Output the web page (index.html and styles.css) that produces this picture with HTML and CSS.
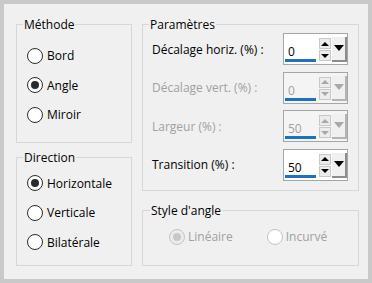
FILE: index.html
```html
<!DOCTYPE html>
<html lang="fr">
<head>
    <meta charset="UTF-8">
    <title>Angle</title>
    <link rel="stylesheet" href="styles.css">
</head>
<body>
    <div class="window">
        <div class="panel">
            <div class="col col-left">
                <fieldset class="group group-methode">
                    <legend>Méthode</legend>
                    <label class="radio"><span class="dot"></span>Bord</label>
                    <label class="radio is-checked"><span class="dot"></span>Angle</label>
                    <label class="radio"><span class="dot"></span>Miroir</label>
                </fieldset>
                <fieldset class="group group-direction">
                    <legend>Direction</legend>
                    <label class="radio is-checked"><span class="dot"></span>Horizontale</label>
                    <label class="radio"><span class="dot"></span>Verticale</label>
                    <label class="radio"><span class="dot"></span>Bilatérale</label>
                </fieldset>
            </div>

            <div class="col col-right">
                <fieldset class="group group-params">
                    <legend>Paramètres</legend>
                    <div class="param-row">
                        <span class="param-label">Décalage horiz. (%) :</span>
                        <div class="spin">
                            <div class="spin-field">0</div>
                            <div class="spin-arrows">
                                <span class="spin-btn up"></span>
                                <span class="spin-btn down"></span>
                            </div>
                            <div class="spin-drop"></div>
                        </div>
                    </div>
                    <div class="param-row is-disabled">
                        <span class="param-label">Décalage vert. (%) :</span>
                        <div class="spin">
                            <div class="spin-field">0</div>
                            <div class="spin-arrows">
                                <span class="spin-btn up"></span>
                                <span class="spin-btn down"></span>
                            </div>
                            <div class="spin-drop"></div>
                        </div>
                    </div>
                    <div class="param-row is-disabled">
                        <span class="param-label">Largeur (%) :</span>
                        <div class="spin">
                            <div class="spin-field">50</div>
                            <div class="spin-arrows">
                                <span class="spin-btn up"></span>
                                <span class="spin-btn down"></span>
                            </div>
                            <div class="spin-drop"></div>
                        </div>
                    </div>
                    <div class="param-row">
                        <span class="param-label">Transition (%) :</span>
                        <div class="spin">
                            <div class="spin-field">50</div>
                            <div class="spin-arrows">
                                <span class="spin-btn up"></span>
                                <span class="spin-btn down"></span>
                            </div>
                            <div class="spin-drop"></div>
                        </div>
                    </div>
                </fieldset>
                <fieldset class="group group-style">
                    <legend>Style d'angle</legend>
                    <div class="radio-line">
                        <label class="radio is-checked is-disabled"><span class="dot"></span>Linéaire</label>
                        <label class="radio is-disabled"><span class="dot"></span>Incurvé</label>
                    </div>
                </fieldset>
            </div>
        </div>
    </div>
</body>
</html>
```

FILE: styles.css
```css
body {
    margin: 0;
    background-color: #f0f0f0;
    font-family: "Open Sans", "Noto Sans", sans-serif;
    font-size: 12px;
    color: #000;
}

.window {
    width: 372px;
    height: 283px;
    box-sizing: border-box;
    border: 4px solid #c9c9c9;
    background-color: #f0f0f0;
}

.panel {
    display: flex;
    gap: 10px;
    padding: 12px 0 0 12px;
}

.col {
    display: flex;
    flex-direction: column;
}

.col-left {
    width: 116px;
    gap: 6px;
}

.col-right {
    width: 217px;
    gap: 11px;
}

/* group boxes */
.group {
    margin: 0;
    border: 1px solid #d7d7d7;
    min-width: 0;
}

.group legend {
    padding: 0 1px;
    line-height: 17px;
}

.group-methode {
    padding: 8px 0 12px 10px;
}

.group-direction {
    padding: 3px 0 8px 10px;
}

.group-methode legend,
.group-direction legend {
    margin-left: -4px;
}

.group-params {
    padding: 0 9px 9px 9px;
    display: flex;
    flex-direction: column;
    gap: 6.5px;
}

.group-params legend {
    margin-left: -3px;
}

.group-style {
    padding: 8px 0 18px 26px;
}

.group-style legend {
    margin-left: -19px;
}

/* radio buttons */
.radio {
    display: flex;
    align-items: center;
    height: 29.5px;
    gap: 4px;
}

.dot {
    width: 16px;
    height: 16px;
    box-sizing: border-box;
    border: 1.5px solid #2b2b2b;
    border-radius: 50%;
    background-color: #fff;
    display: flex;
    align-items: center;
    justify-content: center;
}

.is-checked .dot::after {
    content: "";
    width: 8px;
    height: 8px;
    border-radius: 50%;
    background-color: #2b2b2b;
}

.radio.is-disabled {
    color: #a0a0a0;
}

.radio.is-disabled .dot {
    border: 1px solid #c4c4c4;
}

.radio.is-checked.is-disabled .dot {
    background-color: #ececec;
}

.radio.is-checked.is-disabled .dot::after {
    background-color: #c8c8c8;
}

.radio-line {
    display: flex;
    gap: 34px;
}

.radio-line .radio {
    height: 20px;
    gap: 3px;
}

/* parameter rows */
.param-row {
    display: flex;
    align-items: center;
    justify-content: space-between;
    height: 32px;
}

.param-row.is-disabled .param-label {
    color: #a0a0a0;
}

.spin {
    display: flex;
    width: 65px;
    height: 32px;
    box-sizing: border-box;
    border: 1px solid #a6a6a6;
    background-color: #fff;
    margin-right: 1px;
}

.spin-field {
    position: relative;
    width: 33px;
    padding: 9px 0 0 4px;
    box-sizing: border-box;
    line-height: 17px;
}

.spin-field::after {
    content: "";
    position: absolute;
    left: 1px;
    right: 1px;
    bottom: 2px;
    height: 3px;
    background-color: #1e72bd;
}

.is-disabled .spin {
    background-color: #f4f4f4;
}

.is-disabled .spin-field {
    color: #a0a0a0;
}

.spin-arrows {
    display: flex;
    flex-direction: column;
    gap: 1px;
    padding: 4px 0 0 2px;
}

.spin-btn {
    width: 12px;
    height: 11px;
    box-sizing: border-box;
    border: 1px solid #c8c8c8;
    background-color: #ececec;
    display: flex;
    align-items: center;
    justify-content: center;
}

.spin-btn::after {
    content: "";
    border-left: 4px solid transparent;
    border-right: 4px solid transparent;
}

.spin-btn.up::after {
    border-bottom: 4px solid #000;
}

.spin-btn.down::after {
    border-top: 4px solid #000;
}

.spin-drop {
    width: 15px;
    height: 25px;
    margin: 3px 0 0 1px;
    box-sizing: border-box;
    border-right: 2px solid #8c8c8c;
    border-bottom: 2px solid #8c8c8c;
    background-color: #f0f0f0;
    display: flex;
    justify-content: center;
    padding-top: 8px;
}

.spin-drop::after {
    content: "";
    height: 0;
    border-left: 5px solid transparent;
    border-right: 5px solid transparent;
    border-top: 6px solid #000;
}

.is-disabled .spin-btn.up::after {
    border-bottom-color: #a8a8a8;
}

.is-disabled .spin-btn.down::after {
    border-top-color: #a8a8a8;
}

.is-disabled .spin-drop::after {
    border-top-color: #a8a8a8;
}

.is-disabled .spin-drop {
    border-color: #b4b4b4;
}
```
